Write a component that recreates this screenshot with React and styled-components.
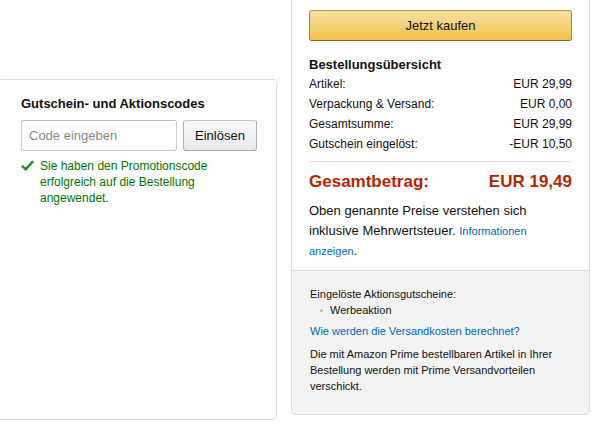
import styled, { createGlobalStyle } from "styled-components";

const GlobalStyle = createGlobalStyle`
    body {
        margin: 0;
        background: #fff;
        font-family: "Liberation Sans", Arial, sans-serif;
        color: #111;
        overflow: hidden;
    }
`;

const Page = styled.div`
    display: flex;
    align-items: flex-start;
    gap: 14px;
    margin-left: -2px;
`;

const CouponCard = styled.div`
    box-sizing: border-box;
    width: 279px;
    height: 341px;
    margin-top: 79px;
    padding: 14px 0 0 22px;
    border: 1px solid #ddd;
    border-radius: 4px;
`;

const CardTitle = styled.h4`
    margin: 0 0 7px;
    font-size: 13px;
    line-height: 19px;
    font-weight: bold;
    color: #111;
`;

const CodeRow = styled.div`
    display: flex;
    gap: 6px;
`;

const CodeInput = styled.input`
    box-sizing: border-box;
    width: 156px;
    height: 31px;
    padding: 0 7px;
    border: 1px solid #ccc;
    border-top-color: #bbb;
    border-radius: 3px;
    font-family: inherit;
    font-size: 13px;
    outline: none;
    &::placeholder {
        color: #8a8a8a;
    }
`;

const RedeemButton = styled.button`
    box-sizing: border-box;
    width: 74px;
    height: 31px;
    padding: 0;
    border: 1px solid #adb1b8;
    border-top-color: #c4c6ca;
    border-bottom-color: #a2a6ac;
    border-radius: 3px;
    background: linear-gradient(#f7f8fa, #e7e9ec);
    font-family: inherit;
    font-size: 13px;
    color: #111;
`;

const Success = styled.div`
    display: flex;
    gap: 6px;
    margin-top: 7px;
    color: #007600;
    font-size: 12px;
    line-height: 16px;
    svg {
        flex: none;
        margin-top: 2px;
    }
`;

const SummaryCard = styled.div`
    box-sizing: border-box;
    width: 299px;
    margin-top: -6px;
    border: 1px solid #ddd;
    border-radius: 4px;
    overflow: hidden;
`;

const SummaryBody = styled.div`
    padding: 15px 17px 9px;
`;

const BuyButton = styled.button`
    display: block;
    box-sizing: border-box;
    width: 263px;
    height: 31px;
    padding: 0;
    border: 1px solid #a88734;
    border-top-color: #b8983f;
    border-bottom-color: #846a29;
    border-radius: 3px;
    background: linear-gradient(#f7dfa5, #f0c14b);
    font-family: inherit;
    font-size: 13px;
    color: #111;
`;

const SummaryTitle = styled.h4`
    margin: 14px 0 0;
    font-size: 13px;
    line-height: 19px;
    font-weight: bold;
    color: #111;
`;

const Row = styled.div`
    display: flex;
    justify-content: space-between;
    height: 20px;
    align-items: center;
    font-size: 12px;
    color: #111;
`;

const Divider = styled.hr`
    margin: 7px 0 0;
    border: none;
    border-top: 1px solid #ddd;
`;

const TotalRow = styled.div`
    display: flex;
    justify-content: space-between;
    margin-top: 8px;
    line-height: 24px;
    font-size: 17px;
    font-weight: bold;
    color: #b12704;
`;

const TaxNote = styled.p`
    margin: 7px 0 0;
    font-size: 13px;
    line-height: 20px;
    color: #111;
`;

const Link = styled.a`
    color: #0066c0;
    font-size: 11px;
    text-decoration: none;
`;

const InfoSection = styled.div`
    padding: 15px 18px 20px;
    background: #f3f3f3;
    border-top: 1px solid #ddd;
    font-size: 11px;
    line-height: 16px;
    color: #111;
`;

const PromoList = styled.ul`
    margin: 0;
    padding: 0 0 0 10px;
    list-style: none;
    li {
        display: flex;
        align-items: center;
        gap: 7px;
    }
    li::before {
        content: "";
        width: 3px;
        height: 3px;
        border-radius: 50%;
        background: #bbb;
    }
`;

const BlockLink = styled(Link)`
    display: block;
    margin-top: 5px;
    line-height: 16px;
`;

const Paragraph = styled.p`
    margin: 7px 0 0;
`;

const CheckIcon = () => (
    <svg width="13" height="11" viewBox="0 0 13 11">
        <path d="M1 5.8 L4.8 9.4 L12 1.2" fill="none" stroke="#1f8a1f" strokeWidth="2.4" strokeLinejoin="miter" />
    </svg>
);

const items = [
    ["Artikel:", "EUR 29,99"],
    ["Verpackung & Versand:", "EUR 0,00"],
    ["Gesamtsumme:", "EUR 29,99"],
    ["Gutschein eingelöst:", "-EUR 10,50"],
];

function App() {
    return (
        <>
            <GlobalStyle />
            <Page>
                <CouponCard>
                    <CardTitle>Gutschein- und Aktionscodes</CardTitle>
                    <CodeRow>
                        <CodeInput placeholder="Code eingeben" />
                        <RedeemButton>Einlösen</RedeemButton>
                    </CodeRow>
                    <Success>
                        <CheckIcon />
                        <span>
                            Sie haben den Promotionscode
                            <br />
                            erfolgreich auf die Bestellung
                            <br />
                            angewendet.
                        </span>
                    </Success>
                </CouponCard>
                <SummaryCard>
                    <SummaryBody>
                        <BuyButton>Jetzt kaufen</BuyButton>
                        <SummaryTitle>Bestellungsübersicht</SummaryTitle>
                        {items.map(([label, value]) => (
                            <Row key={label}>
                                <span>{label}</span>
                                <span>{value}</span>
                            </Row>
                        ))}
                        <Divider />
                        <TotalRow>
                            <span>Gesamtbetrag:</span>
                            <span>EUR 19,49</span>
                        </TotalRow>
                        <TaxNote>
                            Oben genannte Preise verstehen sich inklusive Mehrwertsteuer.{" "}
                            <Link href="#">Informationen anzeigen</Link>.
                        </TaxNote>
                    </SummaryBody>
                    <InfoSection>
                        <div>Eingelöste Aktionsgutscheine:</div>
                        <PromoList>
                            <li>Werbeaktion</li>
                        </PromoList>
                        <BlockLink href="#">Wie werden die Versandkosten berechnet?</BlockLink>
                        <Paragraph>
                            Die mit Amazon Prime bestellbaren Artikel in Ihrer Bestellung werden mit Prime Versandvorteilen verschickt.
                        </Paragraph>
                    </InfoSection>
                </SummaryCard>
            </Page>
        </>
    );
}

export default App;
